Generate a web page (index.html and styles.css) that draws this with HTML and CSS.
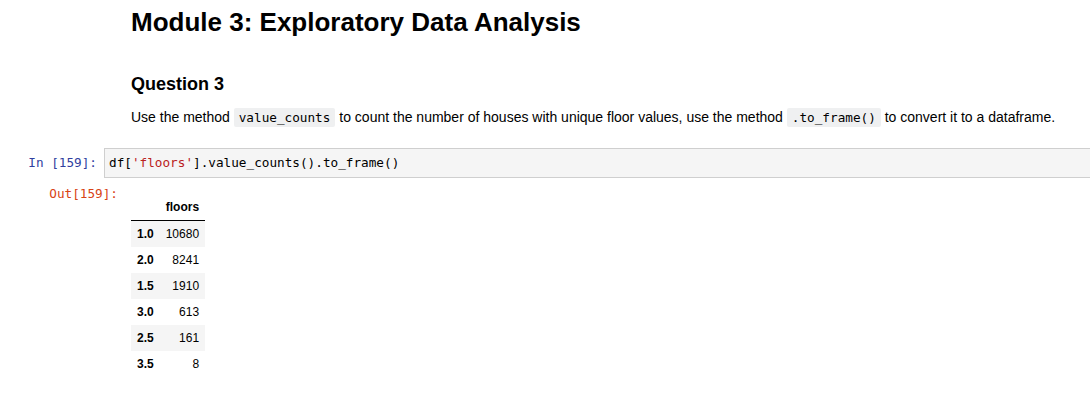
FILE: index.html
```html
<!DOCTYPE html>
<html>
<head>
<meta charset="utf-8">
<link rel="stylesheet" href="styles.css">
</head>
<body>
<div class="nb">
  <div class="md">
    <h1 class="title">Module 3: Exploratory Data Analysis</h1>
    <h3 class="question">Question 3</h3>
    <p class="desc">Use the method <code class="chip">value_counts</code> to count the number of houses with unique floor values, use the method <code class="chip">.to_frame()</code> to convert it to a dataframe.</p>
  </div>
  <div class="cell in-cell">
    <div class="prompt in-prompt">In&nbsp;[159]:</div>
    <div class="input"><pre class="code">df[<span class="str">'floors'</span>].value_counts().to_frame()</pre></div>
  </div>
  <div class="cell out-cell">
    <div class="prompt out-prompt">Out[159]:</div>
    <table class="df">
      <thead>
        <tr><th></th><th>floors</th></tr>
      </thead>
      <tbody>
        <tr><th>1.0</th><td>10680</td></tr>
        <tr><th>2.0</th><td>8241</td></tr>
        <tr><th>1.5</th><td>1910</td></tr>
        <tr><th>3.0</th><td>613</td></tr>
        <tr><th>2.5</th><td>161</td></tr>
        <tr><th>3.5</th><td>8</td></tr>
      </tbody>
    </table>
  </div>
</div>
</body>
</html>
```
FILE: styles.css
```css
html, body {
  margin: 0;
  padding: 0;
  background: #fff;
  overflow: hidden;
}
body {
  font-family: "Liberation Sans", Arial, sans-serif;
  color: #000;
}
.nb {
  display: flex;
  flex-direction: column;
}
.md {
  padding-left: 131px;
  padding-right: 20px;
}
.title {
  margin: 0;
  padding-top: 9px;
  font-size: 26px;
  line-height: 26px;
  font-weight: bold;
}
.question {
  margin: 0;
  padding-top: 40px;
  font-size: 18px;
  line-height: 18px;
  font-weight: bold;
}
.desc {
  margin: 0;
  padding-top: 17px;
  font-size: 14px;
  line-height: 14px;
}
.chip {
  font-family: "DejaVu Sans Mono", monospace;
  font-size: 12.7px;
  background: #eff0f1;
  padding: 2px 5px;
  border-radius: 2px;
}
.cell {
  display: flex;
  align-items: flex-start;
}
.prompt {
  font-family: "DejaVu Sans Mono", monospace;
  font-size: 12.7px;
  line-height: 16px;
  text-align: right;
  flex: none;
  box-sizing: border-box;
}
.in-prompt {
  width: 104px;
  padding-right: 7px;
  padding-top: 7px;
  color: #303f9f;
}
.out-prompt {
  width: 131px;
  padding-right: 13px;
  color: #d84315;
}
.in-cell {
  margin-top: 23px;
}
.input {
  flex: 1;
  border: 1px solid #cfcfcf;
  border-right: none;
  background: #f5f5f5;
  height: 28px;
  padding-left: 4px;
}
.code {
  margin: 0;
  font-family: "DejaVu Sans Mono", monospace;
  font-size: 12.7px;
  line-height: 16px;
  padding-top: 6px;
  color: #000;
}
.str {
  color: #ba2121;
}
.out-cell {
  margin-top: 8px;
}
.df {
  border-collapse: collapse;
  font-size: 12px;
  margin-top: 8px;
}
.df th, .df td {
  padding: 6px;
  text-align: right;
  line-height: normal;
  border: none;
}
.df th {
  font-weight: bold;
}
.df thead tr {
  border-bottom: 1px solid #000;
}
.df tbody tr:nth-child(odd) {
  background: #f5f5f5;
}
```
